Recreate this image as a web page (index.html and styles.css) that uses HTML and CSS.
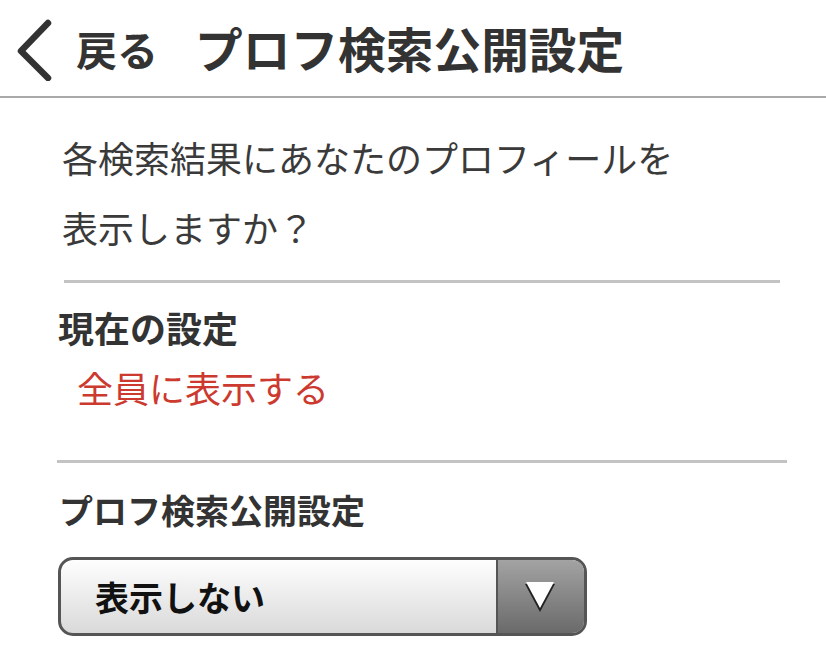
FILE: index.html
```html
<!DOCTYPE html>
<html lang="ja">
<head>
<meta charset="utf-8">
<title>プロフ検索公開設定</title>
<link rel="stylesheet" href="styles.css">
</head>
<body>
<header class="header">
  <a class="back" href="#">
    <svg class="chev" width="40" height="62" viewBox="0 0 40 62"><polyline points="32,4 5,32 32,59" fill="none" stroke="#333" stroke-width="6.5" stroke-linecap="round" stroke-linejoin="round"/></svg>
    <span class="back-label">戻る</span>
  </a>
  <h1 class="title">プロフ検索公開設定</h1>
</header>
<main class="content">
  <p class="question">各検索結果にあなたのプロフィールを<br>表示しますか？</p>
  <hr class="rule rule-1">
  <h2 class="label">現在の設定</h2>
  <p class="current">全員に表示する</p>
  <hr class="rule rule-2">
  <h2 class="label label-small">プロフ検索公開設定</h2>
  <div class="select">
    <span class="select-value">表示しない</span>
    <span class="select-btn">
      <svg width="34" height="32" viewBox="0 0 34 32"><polygon points="2,3 32,3 17,31" fill="#222"/><polygon points="3,1 31,1 17,27" fill="#fff"/></svg>
    </span>
  </div>
</main>
</body>
</html>
```
FILE: styles.css
```css
* { box-sizing: border-box; }
html, body { margin: 0; padding: 0; background: #fff; }
body {
  font-family: "Noto Sans CJK JP", "Noto Sans", sans-serif;
  color: #333;
  width: 826px;
}
.header {
  height: 98px;
  border-bottom: 2px solid #a9a9a9;
  display: flex;
  align-items: center;
  padding-left: 16px;
}
.back {
  display: flex;
  align-items: center;
  text-decoration: none;
  color: #333;
}
.chev { display: block; margin-top: 4px; }
.back-label {
  font-size: 41px;
  font-weight: 700;
  margin-left: 20px;
  line-height: 1;
}
.title {
  margin: 0 0 0 37px;
  font-size: 47.7px;
  font-weight: 700;
  line-height: 1;
  color: #333;
}
.content {
  display: flex;
  flex-direction: column;
}
.question {
  margin: 24px 0 0 62px;
  font-size: 36px;
  line-height: 70px;
  font-weight: 400;
  color: #3a3a3a;
}
.rule {
  border: 0;
  height: 3px;
  background: #c3c3c3;
  margin: 0;
}
.rule-1 { margin: 18px 0 0 64px; width: 716px; }
.rule-2 { margin: 48px 0 0 57px; width: 730px; }
.label {
  margin: 22px 0 0 58px;
  font-size: 36px;
  line-height: 44px;
  font-weight: 700;
  color: #333;
}
.label-small {
  margin-top: 25px;
  font-size: 34px;
  margin-left: 59px;
}
.current {
  margin: 13px 0 0 77px;
  font-size: 36px;
  line-height: 50px;
  color: #cc3a2f;
}
.select {
  margin: 25px 0 0 58px;
  width: 529px;
  height: 79px;
  border: 3px solid #555;
  border-radius: 15px;
  background: linear-gradient(#fefefe, #d9d9d9);
  display: flex;
  overflow: hidden;
}
.select-value {
  flex: 1;
  display: flex;
  align-items: center;
  padding-left: 34px;
  font-size: 34px;
  font-weight: 700;
  color: #111;
}
.select-btn {
  width: 88px;
  border-left: 2px solid #555;
  background: linear-gradient(#a3a3a3, #6a6a6a);
  display: flex;
  align-items: center;
  justify-content: center;
}
.select-btn svg { display: block; margin-right: 2px; }
```
